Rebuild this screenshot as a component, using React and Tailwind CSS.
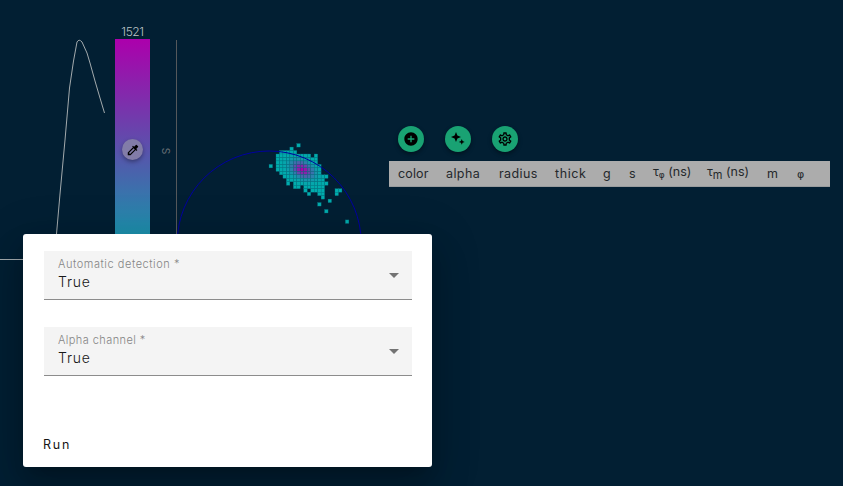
import React from "react";
import { MdColorize, MdOutlineSettings, MdAddCircle } from "react-icons/md";

// Histogram bins of the phasor cloud: [row, first column, last column]
const RUNS = [
  [-3, 6, 6], [-2, 4, 4], [-1, 1, 5], [0, 0, 9], [0, 11, 11], [1, 0, 11], [2, 0, 11],
  [3, -2, -2], [3, 0, 12], [4, 0, 12], [5, 1, 12], [6, 2, 14], [7, 3, 13], [8, 3, 3],
  [8, 5, 14], [9, 5, 6], [9, 8, 13], [10, 8, 8], [10, 10, 13], [10, 17, 18], [11, 9, 9],
  [11, 12, 13], [11, 17, 17], [12, 13, 13], [13, 15, 15], [14, 12, 12], [16, 14, 14], [19, 20, 20],
];
const CELLS = RUNS.flatMap(([r, a, b]) =>
  Array.from({ length: b - a + 1 }, (_, i) => {
    const c = a + i;
    const dx = c - 7.1;
    const dy = r - 4;
    const t = Math.exp(-(dx * dx * 0.15 + dy * dy * 0.24 - dx * dy * 0.14));
    return { c, r, fill: `rgb(${Math.round(172 * t)},${Math.round(172 * (1 - t))},172)` };
  })
);
const P = 3.47;

function Sparkle() {
  return (
    <svg viewBox="0 0 14 14" className="h-3.5 w-3.5" fill="currentColor">
      <path d="M5 0 6.4 3.6 10 5 6.4 6.4 5 10 3.6 6.4 0 5 3.6 3.6Z" />
      <path d="M10.8 7 11.6 9 13.7 9.9 11.6 10.8 10.8 12.8 9.9 10.8 7.8 9.9 9.9 9Z" />
    </svg>
  );
}

function Fab({ children }) {
  return (
    <button className="flex h-[26px] w-[26px] items-center justify-center rounded-full bg-[#19a273] text-black shadow-[0_2px_4px_rgba(0,0,0,0.4)]">
      {children}
    </button>
  );
}

function Col({ w, children }) {
  return <span className={`${w} block shrink-0 whitespace-nowrap`}>{children}</span>;
}

function Field({ label, value, labelSpacing }) {
  return (
    <div className="flex h-[49px] w-[368px] items-center justify-between border-b border-[#8c8c8c] bg-[#f4f4f4] pr-[13px] pl-3.5">
      <div className="flex h-full flex-col pt-1.5">
        <span className={`h-3.5 text-[11px] leading-[15px] font-light text-[#858585] ${labelSpacing}`}>{label}</span>
        <span className="h-5 text-[14px] leading-[21px] font-light tracking-[0.8px] text-[#181818]">{value}</span>
      </div>
      <svg viewBox="0 0 10 5" className="h-[5px] w-[10px]" fill="#737373"><path d="M0 0H10L5 5Z" /></svg>
    </div>
  );
}

export default function App() {
  return (
    <div className="relative flex h-[486px] w-[843px] overflow-hidden bg-[#021f33] font-['Inter','Liberation_Sans',sans-serif]">
      <svg width="115" height="486" className="shrink-0" fill="none" stroke="#a3aaad">
        <path d="M0 259.5H54L56.5 234L60 194L65 140L69.5 88L73.5 61L77 42Q79 38.5 82 42L87 53L90 63L95 81L100 98L104.5 113" />
      </svg>
      <div className="flex w-[35px] shrink-0 flex-col items-center pt-6">
        <span className="h-[15px] text-[12px] leading-[15px] font-light tracking-[-0.4px] text-[#bcc2c5]">1521</span>
        <div className="flex h-[232px] w-[35px] justify-center bg-linear-to-b/srgb from-[#ac00ac] to-[#00acac] pt-[100px]">
          <div className="flex h-[21px] w-[21px] items-center justify-center rounded-full bg-[#827ca8] shadow-[0_2px_4px_rgba(0,0,0,0.35)]">
            <MdColorize className="h-[14px] w-[14px] text-black" />
          </div>
        </div>
      </div>
      <svg width="239" height="486" viewBox="150 0 239 486" className="shrink-0">
        <path d="M176.5 40V450" stroke="#55585b" />
        <text transform="translate(162 147.5) rotate(90)" fontSize="13.5" fontWeight="300" fill="#697076">s</text>
        {CELLS.map(({ c, r, fill }) => (
          <rect key={`${c},${r}`} x={276 + c * P} y={154 + r * P} width={P} height={P} fill={fill} stroke="#087484" strokeWidth="0.3" />
        ))}
        <ellipse cx="269.2" cy="243" rx="92" ry="92" fill="none" stroke="#0000a0" />
      </svg>
      <main className="flex w-[441px] shrink-0 flex-col pt-[126px]">
        <div className="flex gap-[21px] pl-[9px]">
          <Fab><MdAddCircle className="h-4 w-4" /></Fab>
          <Fab><Sparkle /></Fab>
          <Fab><MdOutlineSettings className="h-4 w-4" /></Fab>
        </div>
        <div className="mt-[9px] flex h-[26px] border-b border-[#989b9d] bg-[#acacac] pl-[9px] text-[12.5px] leading-[25px] text-[#24282b]">
          <Col w="w-[48px] tracking-[0.15px]">color</Col>
          <Col w="w-[53px] tracking-[0.4px]">alpha</Col>
          <Col w="w-[56px] tracking-[0.4px]">radius</Col>
          <Col w="w-[48px] tracking-[0.6px]">thick</Col>
          <Col w="w-[26px]">g</Col>
          <Col w="w-[24px]">s</Col>
          <Col w="w-[54px]"><span className="relative -top-[2px]">τ<sub className="font-['DejaVu_Sans'] text-[9px]">φ</sub> (ns)</span></Col>
          <Col w="w-[60px]"><span className="relative -top-[2px]">τ<sub className="text-[11px]">m</sub> (ns)</span></Col>
          <Col w="w-[30px]">m</Col>
          <Col w="w-[20px]"><span className="font-['DejaVu_Sans'] text-[11px]">φ</span></Col>
        </div>
      </main>
      <section role="dialog" className="absolute top-[234px] left-[23px] flex h-[233px] w-[409px] flex-col rounded-[3px] bg-white pt-[17px] pl-[21px] shadow-[0_11px_15px_-7px_rgba(0,0,0,0.2),0_24px_38px_3px_rgba(0,0,0,0.14),0_9px_46px_8px_rgba(0,0,0,0.12)]">
        <div className="flex flex-col gap-[27px]">
          <Field label="Automatic detection *" value="True" labelSpacing="tracking-[0.55px]" />
          <Field label="Alpha channel *" value="True" labelSpacing="tracking-[0.42px]" />
        </div>
        <button className="mt-[60px] -ml-px w-fit text-left text-[12.5px] leading-[18px] tracking-[1.8px] text-[#151515]">Run</button>
      </section>
    </div>
  );
}
